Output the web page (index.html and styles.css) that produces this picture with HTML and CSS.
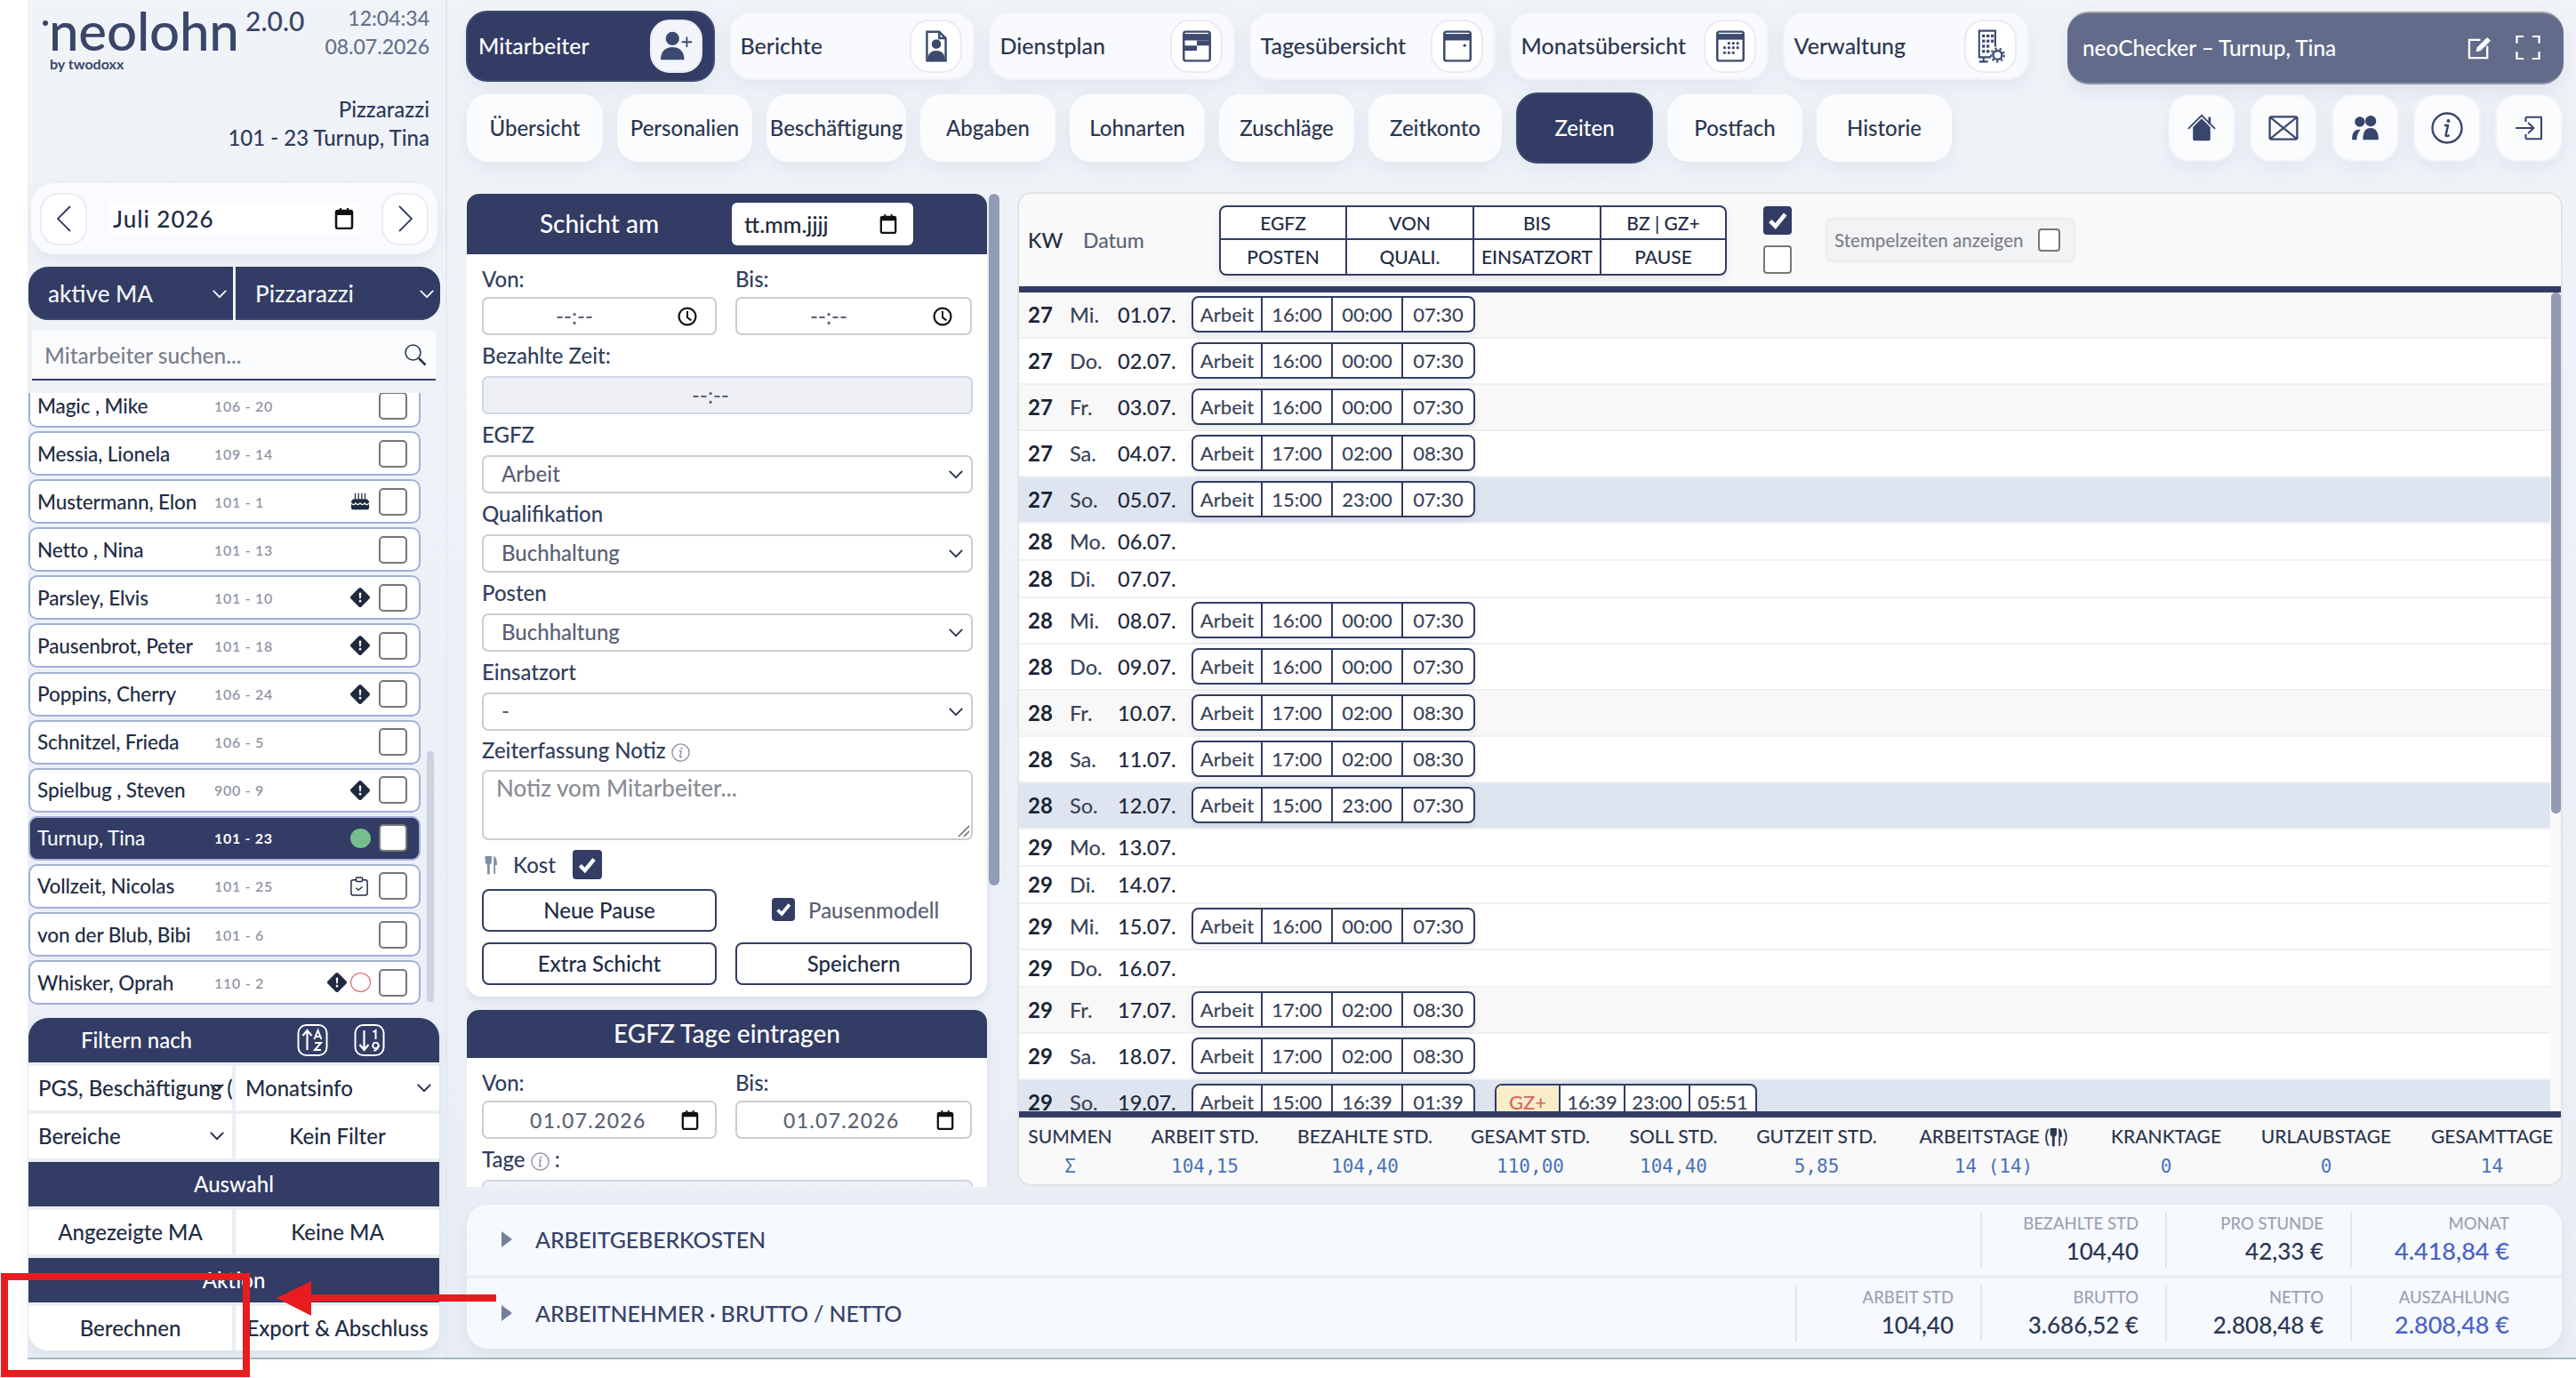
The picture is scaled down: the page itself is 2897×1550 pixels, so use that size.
FILE: index.html
```html
<!DOCTYPE html>
<html lang="de">
<head>
<meta charset="utf-8">
<title>neolohn</title>
<link rel="stylesheet" href="styles.css">
</head>
<body>
<svg class="defs" width="0" height="0" aria-hidden="true">
  <defs>
    <symbol id="i-userplus" viewBox="0 0 40 40"><circle cx="15" cy="11" r="8" fill="currentColor"/><path d="M1 36c0-10 6-15 14-15s14 5 14 15z" fill="currentColor"/><path d="M32 9v12M26 15h12" stroke="currentColor" stroke-width="2" fill="none"/></symbol>
    <symbol id="i-report" viewBox="0 0 32 44"><path d="M3 2h17l9 9v31H3z" fill="#fff" stroke="currentColor" stroke-width="3"/><path d="M20 2v9h9" fill="none" stroke="currentColor" stroke-width="3"/><circle cx="16" cy="19" r="6.5" fill="currentColor"/><path d="M4 41c0-9 5-13 12-13s12 4 12 13z" fill="currentColor"/></symbol>
    <symbol id="i-roster" viewBox="0 0 40 44"><rect x="2" y="2" width="36" height="40" rx="3" fill="#fff" stroke="currentColor" stroke-width="3"/><path d="M2 5h36v9H2z" fill="currentColor"/><path d="M20 14h18v7H20zM2 21h18v7H2z" fill="currentColor"/></symbol>
    <symbol id="i-day" viewBox="0 0 40 44"><rect x="2" y="2" width="36" height="40" rx="3" fill="#fff" stroke="currentColor" stroke-width="3"/><path d="M2 5h36v9H2z" fill="currentColor"/><circle cx="30" cy="21" r="2" fill="currentColor"/></symbol>
    <symbol id="i-month" viewBox="0 0 40 44"><rect x="2" y="2" width="36" height="40" rx="3" fill="#fff" stroke="currentColor" stroke-width="3"/><path d="M2 5h36v8H2z" fill="currentColor"/><g fill="currentColor"><circle cx="18" cy="18" r="2"/><circle cx="24" cy="18" r="2"/><circle cx="30" cy="18" r="2"/><circle cx="12" cy="24" r="2"/><circle cx="18" cy="24" r="2"/><circle cx="24" cy="24" r="2"/><circle cx="30" cy="24" r="2"/><circle cx="12" cy="31" r="2"/><circle cx="18" cy="31" r="2"/><circle cx="24" cy="31" r="2"/></g></symbol>
    <symbol id="i-building" viewBox="0 0 40 46"><path d="M20 38H4V2h22v22" fill="none" stroke="currentColor" stroke-width="2.5"/><path d="M10 38v6M4 44h12" stroke="currentColor" stroke-width="2.5"/><g fill="currentColor"><rect x="8" y="7" width="4" height="4"/><rect x="14" y="7" width="4" height="4"/><rect x="20" y="7" width="4" height="4"/><rect x="8" y="14" width="4" height="4"/><rect x="14" y="14" width="4" height="4"/><rect x="20" y="14" width="4" height="4"/><rect x="8" y="21" width="4" height="4"/><rect x="14" y="21" width="4" height="4"/><rect x="8" y="28" width="4" height="4"/><rect x="14" y="28" width="4" height="4"/></g><circle cx="29" cy="35" r="6" fill="none" stroke="currentColor" stroke-width="3"/><circle cx="29" cy="35" r="9" fill="none" stroke="currentColor" stroke-width="2.5" stroke-dasharray="3 3.4"/></symbol>
    <symbol id="i-home" viewBox="0 0 36 36"><path d="M7 17 18 6l11 11v15a2 2 0 0 1-2 2H9a2 2 0 0 1-2-2z" fill="currentColor"/><path d="M1 19 18 2l17 17" fill="none" stroke="currentColor" stroke-width="2"/><path d="M28 4v9" stroke="currentColor" stroke-width="3"/></symbol>
    <symbol id="i-mail" viewBox="0 0 36 30"><rect x="1.5" y="1.5" width="33" height="27" rx="2" fill="none" stroke="currentColor" stroke-width="2.5"/><path d="M2 2l32 26M34 2 2 28" stroke="currentColor" stroke-width="2.2" fill="none"/></symbol>
    <symbol id="i-people" viewBox="0 0 36 32"><circle cx="11" cy="8" r="6.5" fill="currentColor"/><circle cx="25" cy="7" r="7" fill="currentColor"/><path d="M15 31c0-10 3-15 10-15s10 6 10 15z" fill="currentColor"/><path d="M1 31c0-9 3-14 11-13-3 3-5 8-5 13z" fill="currentColor"/></symbol>
    <symbol id="i-info" viewBox="0 0 36 36"><circle cx="18" cy="18" r="16.5" fill="none" stroke="currentColor" stroke-width="2.4"/><circle cx="19.5" cy="10" r="2" fill="currentColor"/><path d="M15 15h4l-2.4 11c-.2 1.2 1.5 1.6 4 0" fill="none" stroke="currentColor" stroke-width="2.4" stroke-linejoin="round"/></symbol>
    <symbol id="i-exit" viewBox="0 0 36 32"><path d="M14 2h20v28H14" fill="none" stroke="currentColor" stroke-width="2.4" stroke-linejoin="round"/><path d="M14 8V2M14 30v-6" stroke="currentColor" stroke-width="2.4"/><path d="M1 16h23M17 9l7 7-7 7" fill="none" stroke="currentColor" stroke-width="2.4"/></symbol>
    <symbol id="i-edit" viewBox="0 0 28 28"><path d="M15 5H2v21h21V12" fill="none" stroke="currentColor" stroke-width="2.4"/><path d="M10 19l1-5L23 2l4 4-12 12z" fill="currentColor"/></symbol>
    <symbol id="i-expand" viewBox="0 0 28 28"><path d="M1 9V1h8M19 1h8v8M27 19v8h-8M9 27H1v-8" fill="none" stroke="currentColor" stroke-width="2.4"/></symbol>
    <symbol id="i-cal" viewBox="0 0 22 24"><rect x="2" y="3" width="18" height="20" rx="2" fill="#fff" stroke="#111" stroke-width="2.5"/><path d="M2 3h18v5H2zM6 0h2v4H6zM14 0h2v4h-2z" fill="#111"/></symbol>
    <symbol id="i-clock" viewBox="0 0 20 20"><circle cx="10" cy="10" r="8.6" fill="none" stroke="#111" stroke-width="2"/><path d="M10 4.5V11l4 3" fill="none" stroke="#111" stroke-width="1.8"/></symbol>
    <symbol id="i-chev" viewBox="0 0 20 12"><path d="M2 2l8 8 8-8" fill="none" stroke="currentColor" stroke-width="2.2"/></symbol>
    <symbol id="i-diamond" viewBox="0 0 16 16"><path fill="currentColor" d="M9.05.435c-.58-.58-1.52-.58-2.1 0L.436 6.95c-.58.58-.58 1.519 0 2.098l6.516 6.516c.58.58 1.519.58 2.098 0l6.516-6.516c.58-.58.58-1.519 0-2.098zM8 4c.535 0 .954.462.9.995l-.35 3.507a.552.552 0 0 1-1.1 0L7.1 4.995A.905.905 0 0 1 8 4m.002 6a1 1 0 1 1 0 2 1 1 0 0 1 0-2"/></symbol>
    <symbol id="i-cake" viewBox="0 0 24 24"><path d="M6 2v7M10 2v7M14 2v7M18 2v7" stroke="currentColor" stroke-width="1.4"/><path d="M1 13c0-2 2-4 4-4h14c2 0 4 2 4 4v7c0 1-1 2-2 2H3c-1 0-2-1-2-2z" fill="currentColor"/><path d="M1 14c2 2.500 4 2.500 5.500 0 2 2.500 3.500 2.500 5.500 0 2 2.500 3.500 2.500 5.500 0 1.500 2.500 3.500 2.500 5.500 0" stroke="#fff" stroke-width="1.300" fill="none"/></symbol>
    <symbol id="i-clip" viewBox="0 0 22 24"><rect x="1" y="4" width="20" height="19" rx="2.5" fill="none" stroke="currentColor" stroke-width="1.6"/><rect x="7" y="1" width="8" height="5" rx="1.5" fill="#fff" stroke="currentColor" stroke-width="1.6"/><path d="M7 14l3 2.5 5-4" fill="none" stroke="currentColor" stroke-width="1.4"/></symbol>
    <symbol id="i-fork" viewBox="0 0 16 24"><path d="M1 1v7c0 2 1 3 2.5 3V23h2V11C7 11 8 10 8 8V1M4.500 1v7" fill="currentColor" stroke="currentColor"/><path d="M11 1c3 1 4 5 4 9v2h-2v11h-2z" fill="currentColor"/></symbol>
    <symbol id="i-check" viewBox="0 0 24 24"><path d="M5 12.500l5 5L19.500 6" fill="none" stroke="#fff" stroke-width="4"/></symbol>
    <symbol id="i-sortaz" viewBox="0 0 34 36"><rect x="1" y="1" width="32" height="34" rx="9" fill="none" stroke="currentColor" stroke-width="2"/><path d="M11 29V8M6 13l5-6 5 6" fill="none" stroke="currentColor" stroke-width="2.2"/><path d="M19 17l4-10 4 10M20.500 14h5M19.500 21h7l-7 8h7" fill="none" stroke="currentColor" stroke-width="2"/></symbol>
    <symbol id="i-sort19" viewBox="0 0 34 36"><rect x="1" y="1" width="32" height="34" rx="9" fill="none" stroke="currentColor" stroke-width="2"/><path d="M11 7v21M6 23l5 6 5-6" fill="none" stroke="currentColor" stroke-width="2.2"/><path d="M21 9l3-2v10" fill="none" stroke="currentColor" stroke-width="2"/><circle cx="24" cy="24" r="3.300" fill="none" stroke="currentColor" stroke-width="2"/><path d="M27 24c0 3-2 5-5 6" fill="none" stroke="currentColor" stroke-width="2"/></symbol>
  </defs>
</svg>

<div class="app">
  <aside class="side">
    <div class="brand">
      <div class="brand-top">
        <div class="logo"><span class="logo-word"><i class="logo-dot"></i>neolohn</span><span class="logo-by">by twodoxx</span></div>
        <div class="version">2.0.0</div>
        <div class="clock"><div>12:04:34</div><div>08.07.2026</div></div>
      </div>
      <div class="who"><div>Pizzarazzi</div><div>101 - 23 Turnup, Tina</div></div>
    </div>

    <div class="monthbox">
      <div class="mbtn"><svg width="20" height="30" viewBox="0 0 20 30"><path d="M17 1 3 15l14 14" fill="none" stroke="#323c64" stroke-width="1.8"/></svg></div>
      <div class="month"><span>Juli 2026</span><svg class="ic-cal" width="22" height="24"><use href="#i-cal"/></svg></div>
      <div class="mbtn"><svg width="20" height="30" viewBox="0 0 20 30"><path d="M3 1l14 14L3 29" fill="none" stroke="#323c64" stroke-width="1.8"/></svg></div>
    </div>

    <div class="darksel">
      <div class="ds"><span>aktive MA</span><svg width="18" height="11"><use href="#i-chev"/></svg></div>
      <div class="ds"><span>Pizzarazzi</span><svg width="18" height="11"><use href="#i-chev"/></svg></div>
    </div>

    <div class="search"><span>Mitarbeiter suchen...</span><svg width="26" height="26" viewBox="0 0 26 26"><circle cx="10.500" cy="10.500" r="8.500" fill="none" stroke="#2c3750" stroke-width="1.6"/><path d="M17 17l7.500 7.500" stroke="#2c3750" stroke-width="2.6"/></svg></div>

    <div class="listwrap">
      <div class="staff">
        <div class="st first"><span class="nm">Magic , Mike</span><span class="no">106 - 20</span><span class="ck"></span></div>
        <div class="st"><span class="nm">Messia, Lionela</span><span class="no">109 - 14</span><span class="ck"></span></div>
        <div class="st"><span class="nm">Mustermann, Elon</span><span class="no">101 - 1</span><svg class="si" width="22" height="22"><use href="#i-cake"/></svg><span class="ck"></span></div>
        <div class="st"><span class="nm">Netto , Nina</span><span class="no">101 - 13</span><span class="ck"></span></div>
        <div class="st"><span class="nm">Parsley, Elvis</span><span class="no">101 - 10</span><svg class="si" width="22" height="22"><use href="#i-diamond"/></svg><span class="ck"></span></div>
        <div class="st"><span class="nm">Pausenbrot, Peter</span><span class="no">101 - 18</span><svg class="si" width="22" height="22"><use href="#i-diamond"/></svg><span class="ck"></span></div>
        <div class="st"><span class="nm">Poppins, Cherry</span><span class="no">106 - 24</span><svg class="si" width="22" height="22"><use href="#i-diamond"/></svg><span class="ck"></span></div>
        <div class="st"><span class="nm">Schnitzel, Frieda</span><span class="no">106 - 5</span><span class="ck"></span></div>
        <div class="st"><span class="nm">Spielbug , Steven</span><span class="no">900 - 9</span><svg class="si" width="22" height="22"><use href="#i-diamond"/></svg><span class="ck"></span></div>
        <div class="st on"><span class="nm">Turnup, Tina</span><span class="no">101 - 23</span><span class="dot green"></span><span class="ck"></span></div>
        <div class="st"><span class="nm">Vollzeit, Nicolas</span><span class="no">101 - 25</span><svg class="si" width="20" height="22"><use href="#i-clip"/></svg><span class="ck"></span></div>
        <div class="st"><span class="nm">von der Blub, Bibi</span><span class="no">101 - 6</span><span class="ck"></span></div>
        <div class="st"><span class="nm">Whisker, Oprah</span><span class="no">110 - 2</span><svg class="si two" width="22" height="22"><use href="#i-diamond"/></svg><span class="dot ring"></span><span class="ck"></span></div>
      </div>
      <div class="listthumb"></div>
    </div>

    <div class="actions">
      <div class="ahead top"><span class="filter-t">Filtern nach</span><svg width="35" height="36"><use href="#i-sortaz"/></svg><svg width="35" height="36"><use href="#i-sort19"/></svg></div>
      <div class="acols">
        <div class="acell sel clip"><span>PGS, Beschäftigung (</span><svg width="18" height="11"><use href="#i-chev"/></svg></div>
        <div class="acell sel"><span>Monatsinfo</span><svg width="18" height="11"><use href="#i-chev"/></svg></div>
      </div>
      <div class="acols">
        <div class="acell sel"><span>Bereiche</span><svg width="18" height="11"><use href="#i-chev"/></svg></div>
        <div class="acell">Kein Filter</div>
      </div>
      <div class="ahead">Auswahl</div>
      <div class="acols">
        <div class="acell">Angezeigte MA</div>
        <div class="acell">Keine MA</div>
      </div>
      <div class="ahead">Aktion</div>
      <div class="acols last">
        <div class="acell">Berechnen</div>
        <div class="acell">Export &amp; Abschluss</div>
      </div>
    </div>
  </aside>

  <main class="main">
    <div class="nav1">
      <div class="tab active"><span>Mitarbeiter</span><span class="tabic"><svg width="38" height="38"><use href="#i-userplus"/></svg></span></div>
      <div class="tab"><span>Berichte</span><span class="tabic"><svg width="26" height="36"><use href="#i-report"/></svg></span></div>
      <div class="tab"><span>Dienstplan</span><span class="tabic"><svg width="36" height="36"><use href="#i-roster"/></svg></span></div>
      <div class="tab"><span>Tagesübersicht</span><span class="tabic"><svg width="36" height="36"><use href="#i-day"/></svg></span></div>
      <div class="tab"><span>Monatsübersicht</span><span class="tabic"><svg width="36" height="36"><use href="#i-month"/></svg></span></div>
      <div class="tab"><span>Verwaltung</span><span class="tabic"><svg width="34" height="38"><use href="#i-building"/></svg></span></div>
      <div class="checker"><span>neoChecker – Turnup, Tina</span><svg width="27" height="27"><use href="#i-edit"/></svg><svg width="28" height="27"><use href="#i-expand"/></svg></div>
    </div>

    <div class="nav2">
      <div class="pill">Übersicht</div>
      <div class="pill">Personalien</div>
      <div class="pill">Beschäftigung</div>
      <div class="pill">Abgaben</div>
      <div class="pill">Lohnarten</div>
      <div class="pill">Zuschläge</div>
      <div class="pill">Zeitkonto</div>
      <div class="pill active">Zeiten</div>
      <div class="pill">Postfach</div>
      <div class="pill">Historie</div>
      <div class="iconbtns">
        <div class="ib"><svg width="36" height="32"><use href="#i-home"/></svg></div>
        <div class="ib"><svg width="36" height="28"><use href="#i-mail"/></svg></div>
        <div class="ib"><svg width="36" height="28"><use href="#i-people"/></svg></div>
        <div class="ib"><svg width="36" height="36"><use href="#i-info"/></svg></div>
        <div class="ib"><svg width="36" height="28"><use href="#i-exit"/></svg></div>
      </div>
    </div>

    <div class="work">
      <div class="leftcol">
        <div class="forms">
          <section class="card">
            <div class="cardhead split"><span class="ch-title">Schicht am</span><div class="headdate"><span>tt.mm.jjjj</span><svg width="20" height="22"><use href="#i-cal"/></svg></div></div>
            <div class="cardbody">
              <div class="two">
                <div><div class="lb firstlb">Von:</div><div class="fld time"><span>--:--</span><svg width="22" height="22"><use href="#i-clock"/></svg></div></div>
                <div><div class="lb firstlb">Bis:</div><div class="fld time"><span>--:--</span><svg width="22" height="22"><use href="#i-clock"/></svg></div></div>
              </div>
              <div class="lb">Bezahlte Zeit:</div>
              <div class="fld dis"><span>--:--</span></div>
              <div class="lb">EGFZ</div>
              <div class="fld sel"><span>Arbeit</span><svg width="18" height="11"><use href="#i-chev"/></svg></div>
              <div class="lb">Qualifikation</div>
              <div class="fld sel"><span>Buchhaltung</span><svg width="18" height="11"><use href="#i-chev"/></svg></div>
              <div class="lb">Posten</div>
              <div class="fld sel"><span>Buchhaltung</span><svg width="18" height="11"><use href="#i-chev"/></svg></div>
              <div class="lb">Einsatzort</div>
              <div class="fld sel"><span>-</span><svg width="18" height="11"><use href="#i-chev"/></svg></div>
              <div class="lb notelb">Zeiterfassung Notiz <svg width="21" height="21"><use href="#i-info"/></svg></div>
              <div class="note"><span>Notiz vom Mitarbeiter...</span><svg width="14" height="14" viewBox="0 0 14 14"><path d="M1 13 13 1M7 13l6-6" stroke="#555" stroke-width="1.2"/></svg></div>
              <div class="kost"><svg class="fork" width="15" height="22"><use href="#i-fork"/></svg><span>Kost</span><span class="cb big"><svg width="26" height="26"><use href="#i-check"/></svg></span></div>
              <div class="two btnrow">
                <div class="obtn">Neue Pause</div>
                <div class="pm"><span class="cb"><svg width="22" height="22"><use href="#i-check"/></svg></span><span>Pausenmodell</span></div>
              </div>
              <div class="two btnrow">
                <div class="obtn">Extra Schicht</div>
                <div class="obtn">Speichern</div>
              </div>
            </div>
          </section>
          <section class="card second">
            <div class="cardhead">EGFZ Tage eintragen</div>
            <div class="cardbody">
              <div class="two">
                <div><div class="lb firstlb">Von:</div><div class="fld date"><span>01.07.2026</span><svg width="20" height="22"><use href="#i-cal"/></svg></div></div>
                <div><div class="lb firstlb">Bis:</div><div class="fld date"><span>01.07.2026</span><svg width="20" height="22"><use href="#i-cal"/></svg></div></div>
              </div>
              <div class="lb">Tage <svg class="tinfo" width="21" height="21"><use href="#i-info"/></svg> :</div>
              <div class="fld dis"></div>
            </div>
          </section>
        </div>
        <div class="formthumb"></div>
      </div>

      <section class="tablecard">
        <div class="thead">
          <span class="h-kw">KW</span><span class="h-date">Datum</span>
          <div class="hgrid"><span>EGFZ</span><span>VON</span><span>BIS</span><span>BZ | GZ+</span><span>POSTEN</span><span>QUALI.</span><span>EINSATZORT</span><span>PAUSE</span></div>
          <div class="hchecks"><span class="cb hc"><svg width="28" height="28"><use href="#i-check"/></svg></span><span class="cb hc off"></span></div>
          <div class="stamp"><span>Stempelzeiten anzeigen</span><i></i></div>
        </div>
        <div class="rowsarea">
          <div class="rows">
            <div class="r alt"><b>27</b><span class="d">Mi.</span><span class="dt">01.07.</span><div class="tile"><span>Arbeit</span><span>16:00</span><span>00:00</span><span>07:30</span></div></div>
            <div class="r"><b>27</b><span class="d">Do.</span><span class="dt">02.07.</span><div class="tile"><span>Arbeit</span><span>16:00</span><span>00:00</span><span>07:30</span></div></div>
            <div class="r alt"><b>27</b><span class="d">Fr.</span><span class="dt">03.07.</span><div class="tile"><span>Arbeit</span><span>16:00</span><span>00:00</span><span>07:30</span></div></div>
            <div class="r"><b>27</b><span class="d">Sa.</span><span class="dt">04.07.</span><div class="tile"><span>Arbeit</span><span>17:00</span><span>02:00</span><span>08:30</span></div></div>
            <div class="r sun"><b>27</b><span class="d">So.</span><span class="dt">05.07.</span><div class="tile"><span>Arbeit</span><span>15:00</span><span>23:00</span><span>07:30</span></div></div>
            <div class="r short"><b>28</b><span class="d">Mo.</span><span class="dt">06.07.</span></div>
            <div class="r short"><b>28</b><span class="d">Di.</span><span class="dt">07.07.</span></div>
            <div class="r"><b>28</b><span class="d">Mi.</span><span class="dt">08.07.</span><div class="tile"><span>Arbeit</span><span>16:00</span><span>00:00</span><span>07:30</span></div></div>
            <div class="r"><b>28</b><span class="d">Do.</span><span class="dt">09.07.</span><div class="tile"><span>Arbeit</span><span>16:00</span><span>00:00</span><span>07:30</span></div></div>
            <div class="r alt"><b>28</b><span class="d">Fr.</span><span class="dt">10.07.</span><div class="tile"><span>Arbeit</span><span>17:00</span><span>02:00</span><span>08:30</span></div></div>
            <div class="r"><b>28</b><span class="d">Sa.</span><span class="dt">11.07.</span><div class="tile"><span>Arbeit</span><span>17:00</span><span>02:00</span><span>08:30</span></div></div>
            <div class="r sun"><b>28</b><span class="d">So.</span><span class="dt">12.07.</span><div class="tile"><span>Arbeit</span><span>15:00</span><span>23:00</span><span>07:30</span></div></div>
            <div class="r short"><b>29</b><span class="d">Mo.</span><span class="dt">13.07.</span></div>
            <div class="r short"><b>29</b><span class="d">Di.</span><span class="dt">14.07.</span></div>
            <div class="r"><b>29</b><span class="d">Mi.</span><span class="dt">15.07.</span><div class="tile"><span>Arbeit</span><span>16:00</span><span>00:00</span><span>07:30</span></div></div>
            <div class="r short"><b>29</b><span class="d">Do.</span><span class="dt">16.07.</span></div>
            <div class="r alt"><b>29</b><span class="d">Fr.</span><span class="dt">17.07.</span><div class="tile"><span>Arbeit</span><span>17:00</span><span>02:00</span><span>08:30</span></div></div>
            <div class="r"><b>29</b><span class="d">Sa.</span><span class="dt">18.07.</span><div class="tile"><span>Arbeit</span><span>17:00</span><span>02:00</span><span>08:30</span></div></div>
            <div class="r sun"><b>29</b><span class="d">So.</span><span class="dt">19.07.</span><div class="tile"><span>Arbeit</span><span>15:00</span><span>16:39</span><span>01:39</span></div><div class="tile gz"><span class="gzl">GZ+</span><span>16:39</span><span>23:00</span><span>05:51</span></div></div>
          </div>
          <div class="rowthumb"></div>
        </div>
        <div class="sums">
          <div class="s"><span>SUMMEN</span><em>Σ</em></div>
          <div class="s"><span>ARBEIT STD.</span><em>104,15</em></div>
          <div class="s"><span>BEZAHLTE STD.</span><em>104,40</em></div>
          <div class="s"><span>GESAMT STD.</span><em>110,00</em></div>
          <div class="s"><span>SOLL STD.</span><em>104,40</em></div>
          <div class="s"><span>GUTZEIT STD.</span><em>5,85</em></div>
          <div class="s"><span>ARBEITSTAGE (<svg width="15" height="22"><use href="#i-fork"/></svg>)</span><em>14 (14)</em></div>
          <div class="s"><span>KRANKTAGE</span><em>0</em></div>
          <div class="s"><span>URLAUBSTAGE</span><em>0</em></div>
          <div class="s"><span>GESAMTTAGE</span><em>14</em></div>
        </div>
      </section>
    </div>

    <div class="costs">
      <div class="cost">
        <div class="ctitle"><i></i>ARBEITGEBERKOSTEN</div>
        <div class="kv"><span>BEZAHLTE STD</span><b>104,40</b></div>
        <div class="kv"><span>PRO STUNDE</span><b>42,33 €</b></div>
        <div class="kv"><span>MONAT</span><b class="blue">4.418,84 €</b></div>
      </div>
      <div class="cost">
        <div class="ctitle"><i></i>ARBEITNEHMER · BRUTTO / NETTO</div>
        <div class="kv"><span>ARBEIT STD</span><b>104,40</b></div>
        <div class="kv"><span>BRUTTO</span><b>3.686,52 €</b></div>
        <div class="kv"><span>NETTO</span><b>2.808,48 €</b></div>
        <div class="kv"><span>AUSZAHLUNG</span><b class="blue">2.808,48 €</b></div>
      </div>
    </div>
  </main>
</div>

<svg class="annot" width="560" height="1550" viewBox="0 0 560 1550" aria-hidden="true">
  <rect x="5" y="1436" width="272" height="109" fill="none" stroke="#e81c1f" stroke-width="8"/>
  <path d="M558 1456H350v-15l-39 19 39 20v-16h208z" fill="#e81c1f"/>
</svg>
</body>
</html>
```

FILE: styles.css
```css
* { box-sizing: border-box; }
html, body { margin: 0; padding: 0; background: #fff; }
body { width: 2897px; height: 1550px; overflow: hidden; position: relative; font-family: "Lato", "Noto Sans", sans-serif; font-weight: 500; color: #2c3750; }
.defs { position: absolute; }
.app { margin-left: 31px; height: 1529px; display: flex; background: linear-gradient(#f0f4f9, #e9eef5); border-bottom: 2px solid #a9bac4; }

/* sidebar */
.side { width: 472px; border-right: 2px solid #e4e9f0; flex: none; }
.brand { height: 206px; padding-right: 18px; }
.brand-top { display: flex; height: 107px; }
.logo { width: 245px; padding: 6px 0 0 17px; display: flex; flex-direction: column; }
.logo-word { font-size: 60px; line-height: 56px; height: 56px; letter-spacing: -.2px; color: #3a4668; position: relative; padding-left: 7px; white-space: nowrap; }
.logo-dot { position: absolute; left: 0; top: 17px; width: 6px; height: 6px; border-radius: 50%; background: #3a4668; }
.logo-by { font-size: 16px; font-weight: 700; color: #3a4668; padding-left: 8px; line-height: 20px; }
.version { font-size: 30px; line-height: 46px; color: #3a4668; }
.clock { margin-left: auto; text-align: right; font-size: 23px; line-height: 32px; padding-top: 4px; color: #66718b; }
.who { text-align: right; font-size: 24px; line-height: 32px; color: #2f3a5c; }

.monthbox { margin-left: 4px; width: 457px; height: 80px; background: #fafbfe; border-radius: 26px; padding: 10px; display: flex; align-items: center; justify-content: space-between; box-shadow: 0 6px 16px rgba(60,80,120,.08); }
.mbtn { width: 53px; height: 59px; border: 2px solid #eaecf1; border-radius: 20px; display: flex; align-items: center; justify-content: center; background: #fff; }
.month { width: 281px; height: 35px; background: #fff; padding: 0 6px 0 4px; display: flex; align-items: center; justify-content: space-between; font-size: 26px; letter-spacing: 1px; color: #222c44; }

.darksel { margin: 14px 0 0 1px; width: 463px; height: 60px; display: flex; gap: 3px; border-radius: 22px; overflow: hidden; }
.ds { flex: 1; background: #323c64; color: #f1f3f8; display: flex; align-items: center; justify-content: space-between; font-size: 26px; padding: 2px 6px 0 22px; border-bottom: 2px solid #3f4a75; }
.ds + .ds { padding-left: 22px; }

.search { margin: 12px 0 0 5px; width: 454px; height: 56px; background: #fbfcfe; border-bottom: 2px solid #323c64; display: flex; align-items: center; justify-content: space-between; padding: 0 10px 0 14px; font-size: 24.500px; color: #7b7f8a; }

.listwrap { margin-top: 14px; height: 690px; display: flex; overflow: hidden; }
.staff { margin-left: 1px; width: 441px; flex: none; }
.st { position: relative; height: 50px; margin-bottom: 4.100px; background: #fff; border: 2px solid #a2afd6; border-radius: 10px; display: flex; align-items: center; padding-left: 8px; font-size: 22.500px; letter-spacing: -.1px; color: #222c44; }
.st.first { margin-top: -11px; }
.nm { width: 199px; white-space: nowrap; }
.no { font-size: 16px; letter-spacing: .7px; color: #8a8f9c; }
.si { color: #1f2a40; position: absolute; left: 360px; }
.si.two { left: 334px; }
.dot { position: absolute; left: 360px; width: 23px; height: 22px; border-radius: 50%; }
.green { background: #74bf8c; }
.ring { border: 1.500px solid #d7606a; background: #fff; }
.ck { position: absolute; left: 392px; width: 32px; height: 31px; border: 2px solid #777; border-radius: 5px; background: #fff; }
.st.on { background: #323c64; color: #f2f4f9; }
.st.on .no { color: #fff; font-weight: 700; }
.listthumb { width: 8px; height: 282px; margin: 403px 0 0 7px; border-radius: 4px; background: #cdd3de; flex: none; }

.actions { margin: 13px 0 0 1px; width: 462px; border-radius: 22px; box-shadow: 0 6px 14px rgba(60,80,120,.07); }
.ahead { height: 50px; padding-bottom: 2px; background: #323c64; color: #fff; display: flex; align-items: center; justify-content: center; font-size: 24px; }
.ahead.top { border-radius: 22px 22px 0 0; justify-content: flex-start; padding-left: 59px; }
.filter-t { width: 243px; }
.ahead.top svg { margin: 2px 29px 0 0; flex: none; }
.acols { display: grid; grid-template-columns: 229px 229px; gap: 4px; margin: 4px 0; }
.acols.last { margin-bottom: 0; border-radius: 0 0 22px 22px; overflow: hidden; }
.acell { height: 50px; padding-bottom: 2px; background: #fff; display: flex; align-items: center; justify-content: center; font-size: 24px; color: #222c44; white-space: nowrap; overflow: hidden; min-width: 0; }
.acell.sel { justify-content: space-between; padding: 0 8px 2px 11px; }
.acell.clip { position: relative; justify-content: flex-start; }
.acell.clip svg { position: absolute; right: 8px; }

/* main */
.main { flex: 1; padding: 12px 14px 0 21px; min-width: 0; }
.nav1 { display: flex; gap: 16px; height: 92px; align-items: flex-start; }
.tab { height: 77px; margin-top: 1px; width: 277px; background: #f8fafe; border: 2px solid #f1f3f8; border-radius: 24px; display: flex; align-items: center; justify-content: space-between; padding: 0 12px 2px 10.500px; font-size: 25px; color: #2c3750; box-shadow: 0 8px 22px rgba(60,80,120,.08); white-space: nowrap; }
.tab:nth-child(1) { width: 280px; padding-left: 12px; }
.tab:nth-child(2) { width: 276px; }
.tab:nth-child(5) { width: 291px; }
.tab.active { height: 80px; margin-top: 0; background: #323c64; border-color: #3f4a75; color: #fff; }
.tabic { width: 59px; height: 60px; margin-bottom: -2px; background: #fff; border: 2px solid #e9ebf1; border-radius: 22px; display: flex; align-items: center; justify-content: center; color: #3b4a6e; flex: none; }
.tab.active .tabic { background: #f3f5fb; border-color: #e9ebf1; }
.checker { margin-left: 27px; flex: 1; height: 82px; margin-top: 1px; background: #636b8a; border-top: 2px solid #9a9aa0; border-bottom: 2px solid #8f93a3; border-radius: 24px; color: #fff; display: flex; align-items: center; padding: 0 26px 2px 17px; font-size: 24.500px; letter-spacing: -.1px; box-shadow: 0 8px 22px rgba(60,80,120,.1); }
.checker span { flex: 1; }
.checker svg { margin-left: 27px; }

.nav2 { display: flex; gap: 16px; height: 80px; align-items: center; margin-left: 1px; }
.pill { height: 76px; padding-bottom: 2px; background: #fbfcfe; border-radius: 24px; display: flex; align-items: center; justify-content: center; font-size: 24px; color: #2c3750; box-shadow: 0 8px 22px rgba(60,80,120,.08); white-space: nowrap; flex: none; }
.pill:nth-child(1) { width: 153px; }
.pill:nth-child(2) { width: 152px; }
.pill:nth-child(3) { width: 157px; }
.pill:nth-child(4), .pill:nth-child(5), .pill:nth-child(6) { width: 152px; }
.pill:nth-child(7) { width: 150px; }
.pill:nth-child(8) { width: 154px; height: 80px; background: #323c64; border: 2px solid #3f4a75; color: #fff; }
.pill:nth-child(9), .pill:nth-child(10) { width: 152px; }
.iconbtns { margin-left: auto; display: flex; gap: 16px; padding-right: 1px; }
.ib { width: 76px; height: 76px; background: #fbfcfe; border: 2px solid #f1f3f8; border-radius: 24px; display: flex; align-items: center; justify-content: center; color: #37466a; box-shadow: 0 8px 22px rgba(60,80,120,.08); }

.work { margin-top: 32px; height: 1119px; display: flex; }
.leftcol { width: 600px; flex: none; height: 1119px; overflow: hidden; display: flex; align-items: flex-start; margin-left: 1px; }
.forms { width: 585px; flex: none; padding-top: 2px; }
.formthumb { width: 12px; height: 778px; margin: 2px 0 0 2px; border-radius: 6px; background: #939ab4; flex: none; }
.card { background: #fff; border-radius: 16px; box-shadow: 0 4px 10px rgba(60,80,120,.1); padding-bottom: 13px; }
.card.second { margin-top: 15px; }
.cardhead { height: 54px; padding-bottom: 2px; background: #323c64; color: #fff; border-radius: 14px 14px 0 0; display: flex; align-items: center; justify-content: center; font-size: 28px; }
.cardhead.split { height: 68px; padding-bottom: 0; justify-content: flex-start; }
.ch-title { width: 298px; text-align: center; padding-bottom: 2px; }
.headdate { width: 204px; height: 48px; background: #fff; border-radius: 6px; display: flex; align-items: center; justify-content: space-between; padding: 0 18px 0 14px; font-size: 25px; color: #1f2937; }
.cardbody { padding: 0 16px 0 17px; }
.two { display: grid; grid-template-columns: 264px 266px; gap: 21px; }
.two > div { min-width: 0; }
.lb { height: 46px; line-height: 46px; font-size: 24px; color: #323e5e; }
.firstlb { height: 48px; padding-top: 5px; line-height: 46px; }
.tinfo, .notelb svg { vertical-align: -4px; color: #8c93a7; }
.fld { height: 43px; border: 2.500px solid #cbccce; border-radius: 7px; background: #fff; display: flex; align-items: center; font-size: 24px; color: #5c6474; }
.fld.time { justify-content: space-between; padding: 0 20px 0 0; }
.fld.time span { flex: 1; text-align: center; padding-right: 14px; }
.fld.date { justify-content: space-between; padding: 0 18px 0 52px; font-size: 23px; letter-spacing: 1.300px; }
.fld.dis { background: #eff0f6; border-color: #cfd4e8; justify-content: center; }
.fld.dis span { padding-right: 38px; }
.fld.sel { justify-content: space-between; padding: 0 8px 2px 20px; color: #5a6175; }
.fld.sel svg { color: #2c3750; margin-top: 2px; }
.notelb { height: 44px; line-height: 44px; }
.note { height: 79px; border: 2.500px solid #cbccce; border-radius: 7px; padding: 2px 14px; font-size: 26px; color: #8a8d94; position: relative; }
.note svg { position: absolute; right: 1px; bottom: 1px; }
.kost { height: 33px; margin: 11px 0; display: flex; align-items: center; font-size: 24px; color: #323e5e; }
.fork { color: #7f8da3; margin: 0 17px 0 3px; }
.cb { display: inline-flex; align-items: center; justify-content: center; width: 26px; height: 26px; background: #323c64; border-radius: 4px; flex: none; }
.cb.big { width: 33px; height: 33px; margin-left: 19px; }
.two.btnrow { margin-bottom: 12px; }
.two.btnrow:last-child { margin-bottom: 0; }
.obtn { height: 48px; padding-bottom: 2px; border: 2.500px solid #323c64; border-radius: 8px; display: flex; align-items: center; justify-content: center; font-size: 24px; color: #222c44; }
.pm { display: flex; align-items: center; padding: 0 0 2px 41px; gap: 15px; font-size: 24px; color: #5a6175; }

/* table */
.tablecard { margin-left: 19px; width: 1738px; height: 1118px; background: #f9f9f9; border: 2px solid #e2e3e6; border-radius: 16px; overflow: hidden; display: flex; flex-direction: column; flex: none; }
.thead { height: 104px; flex: none; display: flex; align-items: center; padding-left: 10px; }
.h-kw { width: 62px; font-size: 23px; color: #222c44; }
.h-date { width: 153px; font-size: 23px; color: #5b6478; }
.hgrid { width: 571px; height: 79px; border: 2.500px solid #323c64; border-radius: 8px; display: grid; grid-template-columns: 142px 143px 143px 1fr; grid-template-rows: 1fr 1fr; background: #fff; box-shadow: 0 4px 8px rgba(60,80,120,.1); }
.hgrid span { display: flex; align-items: center; justify-content: center; font-size: 21px; color: #222c44; border-right: 2.500px solid #323c64; border-bottom: 2.500px solid #323c64; white-space: nowrap; }
.hgrid span:nth-child(4n) { border-right: 0; }
.hgrid span:nth-child(n+5) { border-bottom: 0; }
.hchecks { margin-left: 41px; display: flex; flex-direction: column; gap: 12px; }
.cb.hc { width: 32px; height: 32px; }
.cb.off { background: #fff; border: 2px solid #777; }
.stamp { margin-left: 38px; width: 281px; height: 50px; background: #f2f3f5; border: 2px solid #ecedf0; border-radius: 6px; display: flex; align-items: center; justify-content: space-between; padding: 0 15px 0 8px; font-size: 20.500px; color: #7d8088; white-space: nowrap; }
.stamp i { width: 25px; height: 26px; border: 2px solid #777; border-radius: 4px; background: #fff; flex: none; }
.rowsarea { flex: none; border-top: 7px solid #323c64; border-bottom: 7px solid #323c64; display: flex; overflow: hidden; height: 935px; margin: 0 -2px; }
.rows { width: 1724px; flex: none; padding-left: 2px; }
.r { height: 52px; display: flex; align-items: center; background: #fff; border-bottom: 2px solid #f0f0f1; padding: 0 0 1px 10px; font-size: 23.500px; color: #3a4458; }
.r.alt { background: #f8f8f8; }
.r.sun { background: #dfe5f0; }
.r.short { height: 42px; }
.r b { width: 47px; font-size: 24px; color: #1b2433; font-weight: 700; }
.r .d { width: 54px; }
.r .dt { width: 83px; color: #1f2a3e; }
.tile { width: 319px; height: 41px; border: 2.500px solid #323c64; border-radius: 8px; background: #fff; display: grid; grid-template-columns: 78px 79px 79px 1fr; box-shadow: 0 3px 6px rgba(60,80,120,.1); overflow: hidden; }
.tile span { display: flex; align-items: center; justify-content: center; font-size: 22px; color: #3a4458; border-right: 2.500px solid #323c64; }
.tile span:last-child { border-right: 0; }
.tile.gz { margin-left: 22px; width: 295px; grid-template-columns: 72px 73px 73px 1fr; }
.gzl { background: #f9edc8; color: #d0656a !important; }
.rowthumb { width: 11px; height: 586px; background: #939ab4; border-radius: 5px; margin-left: 1px; flex: none; }
.sums { flex: 1; display: grid; grid-template-columns: 91px 120px 148px 132px 98px 132px 174px 122px 146px 135px; column-gap: 46px; padding: 6px 0 0 12px; }
.s { display: flex; flex-direction: column; align-items: center; white-space: nowrap; }
.s span { font-size: 21px; line-height: 30px; color: #2c3750; }
.s em { font-style: normal; font-weight: 400; font-family: "DejaVu Sans Mono", "Liberation Mono", monospace; font-size: 21px; line-height: 38px; color: #4a72b8; }
.s span svg { vertical-align: -4px; }

/* bottom */
.costs { margin: 20px 2px 0 1px; background: #f6f9fd; border-radius: 24px; box-shadow: 0 6px 16px rgba(60,80,120,.08); overflow: hidden; }
.cost { height: 79px; display: flex; align-items: center; padding-right: 59px; background: #f6f9fd; }
.cost + .cost { margin-top: 4px; box-shadow: 0 -4px 0 #ebedf1; }
.ctitle { flex: 1; display: flex; align-items: center; font-size: 25px; letter-spacing: -.15px; color: #37426a; padding: 0 0 2px 39px; }
.ctitle i { width: 0; height: 0; border-left: 12px solid #72809a; border-top: 9px solid transparent; border-bottom: 9px solid transparent; margin-right: 26px; }
.kv { width: 208px; height: 63px; border-left: 2px solid #e3e6ec; padding-right: 30px; display: flex; flex-direction: column; align-items: flex-end; }
.kv:last-child { padding-right: 0; width: 179px; }
.kv span { font-size: 18.500px; line-height: 26px; color: #9ca2b5; white-space: nowrap; }
.kv b { font-size: 26px; font-weight: 500; line-height: 36px; color: #2b3656; white-space: nowrap; }
.kv b.blue { color: #4a62c8; font-size: 27px; }

.annot { position: absolute; left: 0; top: 0; pointer-events: none; }
```
